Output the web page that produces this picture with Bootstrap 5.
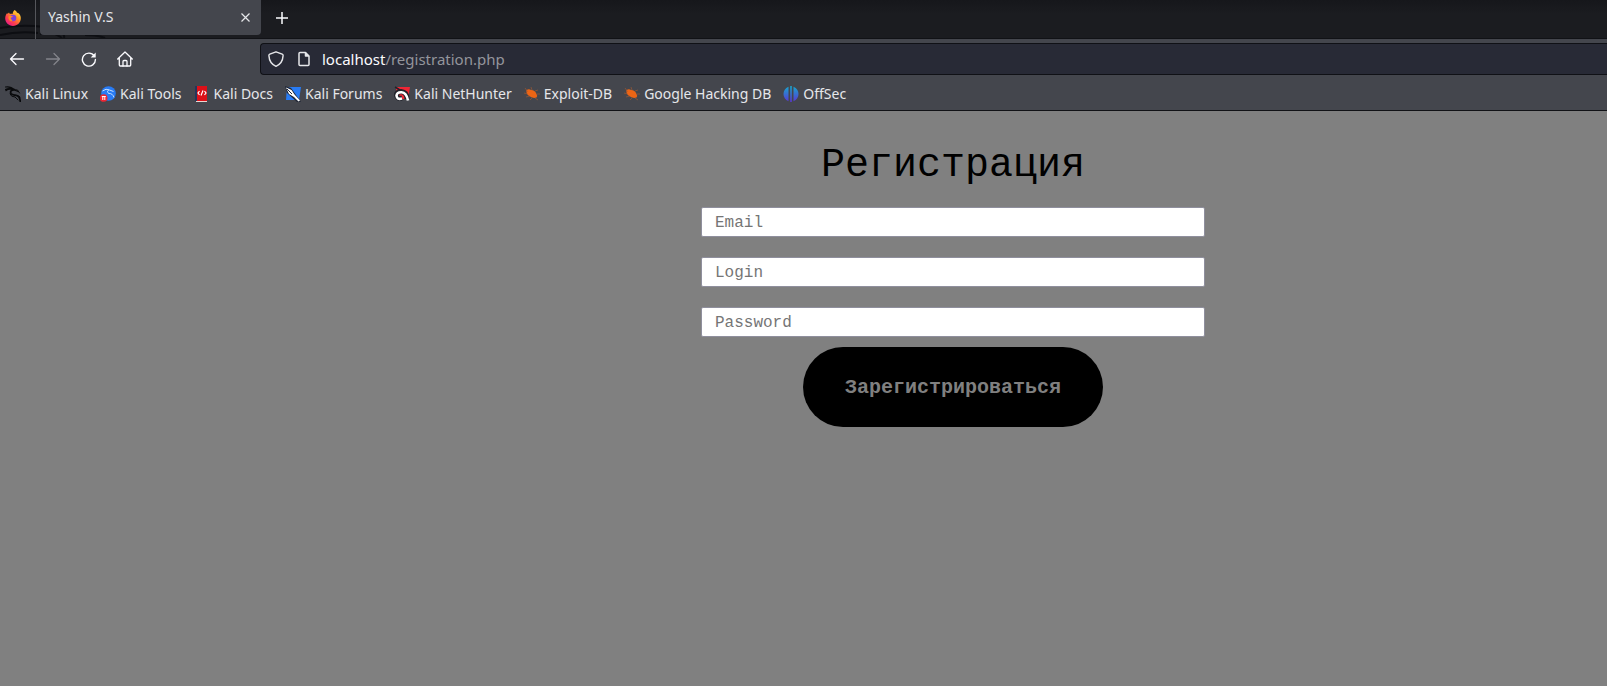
<!DOCTYPE html>
<html lang="ru">
<head>
<meta charset="utf-8">
<meta name="viewport" content="width=device-width, initial-scale=1">
<title>Yashin V.S</title>
<link href="https://cdn.jsdelivr.net/npm/bootstrap@5.3.0/dist/css/bootstrap.min.css" rel="stylesheet">
<style>
body{background:#808080;font-family:"Noto Sans",sans-serif;font-size:14px;line-height:20px;color:#e6e7ea}
svg{display:block;flex:none}
button{color:inherit}
.tabstrip{height:39px;background:linear-gradient(#16171b,#1b1c20 14px);border-bottom:1px solid #111216;position:relative}
.strip-art{position:absolute;left:0;top:0}
.pinned{width:36px;height:39px;padding-left:5px;border-right:1px solid #55565b;position:relative}
.page-tab{width:221px;height:35px;margin-left:4px;padding:0 10px 1px 8px;background:#44464d;border-radius:0 0 4px 4px;position:relative}
.plain{background:none;border:0;padding:0}
.new-tab{margin-left:8px;height:35px;position:relative}
.toolbar{background:#44464d;height:40px;padding:4px 0 4px 8px}
.nav-buttons{width:252px;gap:18px;height:32px}
.urlbar{height:32px;background:#282a36;border:1px solid #101116;border-right:0;border-radius:4px 0 0 4px;padding-left:7px;color:#fbfbfe;font-size:15px}
.urlbar div{margin-left:12px}
.urlbar span{color:#94959c}
.page-icon{margin-left:14px}
.bookmarks{background:#44464d;height:32px;padding:0 5px 2px;border-bottom:1px solid #111216;gap:12px}
.bookmarks a{color:#e6e7ea;gap:4px}
.page{padding:33px 0 0 299px;font-family:"Liberation Mono",monospace;color:#000}
.reg-form{width:100%;max-width:504px}
.reg-form h1{font-size:40px;line-height:44px;margin:0 0 19px;font-weight:400}
.field{height:30px;font-size:16px;line-height:20px;padding:6px 13px 4px;border:1px solid #8f8f9d;border-radius:2px;margin-bottom:20px}
.field::placeholder{color:#757575;opacity:1}
.field:last-of-type{margin-bottom:10px}
.submit{width:300px;max-width:100%;height:80px;padding:2px 0 0;background:#000;color:#808080;border:0;border-radius:40px;font-size:20px;font-weight:700}
</style>
</head>
<body class="overflow-hidden">
<header>
  <div class="tabstrip d-flex">
    <svg class="strip-art" width="110" height="38" fill="none" stroke="#0d0e12"><path d="M0 28q22-4 44-1t20 11M0 35q18-4 38-2M40 34q12-4 22 4M85 35q13 0 20 3" stroke-width="2"/></svg>
    <a href="#" class="pinned d-flex align-items-center pb-1" aria-label="Firefox">
      <svg width="16" height="16" viewBox="0 0 16 16"><defs><linearGradient id="fx" x1="1" y1="0" x2=".2" y2="1"><stop offset="0" stop-color="#fff44f"/><stop offset=".4" stop-color="#ff9a23"/><stop offset=".7" stop-color="#ff3f4b"/><stop offset="1" stop-color="#e5168c"/></linearGradient></defs><path fill="url(#fx)" d="M9.700 0c1.300.8 2 1.800 2.300 2.800.7-.1 1.300.2 1.800.7C15.200 4.700 15.900 6.400 15.800 8.300 15.800 12.500 12.400 16 8 16S.2 12.500.2 8.300c0-2.300.9-4.300 2-5.400l.3 1.100L4 2.600l.9 1.400c1-.4 2-.3 2.800 0C7.600 2.400 8.500.800 9.700 0z"/><circle cx="8" cy="8" r="3.300" fill="#7942d8"/><path fill="#ff8b24" d="M3.500 6.600C4.700 5.300 6.500 5.700 8 6.400c-.5.9-1.500 1-2.200 1.300-.2 1.300.6 2 1.800 2.300l-1.300 1.500C4.300 11 3 9 3.500 6.600z"/></svg>
    </a>
    <div class="page-tab d-flex align-items-center justify-content-between">
      <span>Yashin V.S</span>
      <button class="plain" aria-label="Close tab"><svg width="11" height="11" viewBox="0 0 11 11" stroke="#e6e7ea" stroke-width="1.200"><path d="M1.500 1.500l8 8m0-8l-8 8"/></svg></button>
    </div>
    <button class="plain new-tab" aria-label="New tab"><svg width="26" height="14" viewBox="-7 0 26 14" stroke="#fbfbfe" stroke-width="1.500"><path d="M0 7h12M6 1v12"/></svg></button>
  </div>
  <div class="toolbar d-flex">
    <div class="nav-buttons d-flex align-items-center flex-shrink-0">
      <button class="plain" aria-label="Back"><svg width="18" height="16" viewBox="0 0 18 16" fill="none" stroke="#fbfbfe" stroke-width="1.300" stroke-linecap="round" stroke-linejoin="round"><path d="M15.500 8h-13M8 2.500L2.500 8 8 13.500"/></svg></button>
      <button class="plain" aria-label="Forward"><svg width="18" height="16" viewBox="0 0 18 16" fill="none" stroke="#83848a" stroke-width="1.300" stroke-linecap="round" stroke-linejoin="round"><path d="M2.500 8h13M10 2.500L15.500 8 10 13.500"/></svg></button>
      <button class="plain" aria-label="Reload"><svg width="18" height="16" viewBox="0 0 18 16" fill="none" stroke="#fbfbfe" stroke-width="1.400" stroke-linecap="round"><path d="M14.300 5A6.500 6.500 0 1 0 15.400 8.500"/><path d="M15.700 1.500v5h-5z" fill="#fbfbfe" stroke="none"/></svg></button>
      <button class="plain" aria-label="Home"><svg width="18" height="16" viewBox="0 0 18 16" fill="none" stroke="#fbfbfe" stroke-width="1.300" stroke-linecap="round" stroke-linejoin="round"><path d="M1.700 8L9 1l7.300 7M3.300 7v7q0 1 1 1h9.400q1 0 1-1V7"/><path d="M7 15v-4.500q0-1 1-1h2q1 0 1 1V15"/></svg></button>
    </div>
    <div class="urlbar d-flex align-items-center flex-grow-1">
      <svg width="16" height="16" viewBox="0 0 16 16" fill="none" stroke="#e6e7ea" stroke-width="1.400" stroke-linejoin="round"><path d="M8 .8l6.200 2.400q1 .4.900 1.400C14.800 10 12.500 13.300 8 15.300 3.500 13.300 1.200 10 .9 4.600q-.1-1 .9-1.400z"/></svg>
      <svg class="page-icon" width="12" height="16" viewBox="0 0 12 16" fill="none" stroke="#e6e7ea" stroke-width="1.500" stroke-linejoin="round"><path d="M7.500 1.500H2q-1 0-1 1v11q0 1 1 1h8q1 0 1-1V5z"/><path d="M7.500 1.500V5H11" fill="#e6e7ea"/></svg>
      <div>localhost<span>/registration.php</span></div>
    </div>
  </div>
  <nav class="bookmarks d-flex align-items-center text-nowrap" aria-label="Bookmarks">
    <a href="#" class="d-flex align-items-center text-decoration-none"><svg width="16" height="16" viewBox="0 0 16 16" fill="none" stroke="#090a0c" stroke-linecap="round" stroke-linejoin="round"><path d="M.5 1Q6 .2 9 3.700M1 4.500Q4 2 9.500 4L13 5.500M.5 3.500Q4 1.500 8 3.500" stroke-width="1.200"/><path d="M9 3.500Q4.500 4.500 6 7.500C7.500 10 12 8 14 11q1 2 1.300 4.500" stroke-width="1.800"/><path d="M9 3.700l3.500.3 2 3M10 9q3 0 5 2M5 8q1 3 5 3l3 3" stroke-width="1"/></svg>Kali Linux</a>
    <a href="#" class="d-flex align-items-center text-decoration-none"><svg width="16" height="16" viewBox="0 0 16 16" fill="none"><circle cx="8.500" cy="7.500" r="7.300" fill="#287bf4"/><path d="M2.500 5q3.500-3 7-1l4 1.500M9 3.700Q6 5 8.500 7.500q4-.5 5.500 4" stroke="#c5dfff"/><circle cx="3.700" cy="12" r="3.800" fill="#ed2633"/><path d="M1.800 10.500h4M2.800 11v3M4.800 11v3" stroke="#fff"/></svg>Kali Tools</a>
    <a href="#" class="d-flex align-items-center text-decoration-none"><svg width="16" height="16" viewBox="0 0 16 16"><path fill="#24365c" d="M1 0h2v15H1z"/><path fill="#dc1018" d="M3 0h10v15H3z"/><path fill="#e8d6d2" d="M2 15h11v1H2z"/><path fill="none" stroke="#fff" stroke-width="1.200" d="M5.500 5L4 7l1.500 2M10.500 5L12 7l-1.500 2M9 4.500l-2 5"/></svg>Kali Docs</a>
    <a href="#" class="d-flex align-items-center text-decoration-none"><svg width="16" height="16" viewBox="0 0 16 16"><path fill="#287bf4" d="M2 1h14l-2 13H1z"/><path fill="#202737" d="M0 0l6 2 10 14h-4L2 7z"/><path fill="#fff" d="M1 1.500L6.500 4l3 4.500 5.500 6-1.500 1L9 11 4 8z"/><path stroke="#202737" d="M2 3l5 5"/></svg>Kali Forums</a>
    <a href="#" class="d-flex align-items-center text-decoration-none"><svg width="16" height="16" viewBox="0 0 16 16" fill="none"><path fill="#ee2635" d="M2 1h14l-2 12H2z"/><path stroke="#20222a" stroke-width="5" d="M13 13Q13 6 7 5.500q-4.500 0-4.500 4Q3 13 8 12"/><path stroke="#fff" stroke-width="2.600" d="M14 14.500Q12.500 6.500 7.500 6.200q-4.700-.2-5 3.500Q3 14 8 12.500"/><path stroke="#20222a" stroke-width="1.500" d="M1 1l5 3"/></svg>Kali NetHunter</a>
    <a href="#" class="d-flex align-items-center text-decoration-none"><svg width="16" height="16" viewBox="0 0 16 16"><path fill="#ee6514" d="M2.500 4Q5 2.500 7 4q4 0 5.500 4 1.500 2 0 3.500-4 1.500-8-2Q2 7.500 2.500 4z"/><path fill="none" stroke="#a95a31" stroke-width=".6" d="M1 2l3 4M7 1l1 3M0 7l4 1M2 11l4-1M6 14l2-2M11 5l3-1M13 8h3M11 12l3 2"/></svg>Exploit-DB</a>
    <a href="#" class="d-flex align-items-center text-decoration-none"><svg width="16" height="16" viewBox="0 0 16 16"><path fill="#ee6514" d="M2.500 4Q5 2.500 7 4q4 0 5.500 4 1.500 2 0 3.500-4 1.500-8-2Q2 7.500 2.500 4z"/><path fill="none" stroke="#a95a31" stroke-width=".6" d="M1 2l3 4M7 1l1 3M0 7l4 1M2 11l4-1M6 14l2-2M11 5l3-1M13 8h3M11 12l3 2"/></svg>Google Hacking DB</a>
    <a href="#" class="d-flex align-items-center text-decoration-none"><svg width="16" height="16" viewBox="0 0 16 16"><defs><linearGradient id="os" x2="0" y2="1"><stop stop-color="#16a8ce"/><stop offset="1" stop-color="#5936d2"/></linearGradient></defs><path fill="url(#os)" d="M5.500.8v14.400Q.5 13 .5 8T5.500.8zM7.200 0h1.600v16H7.200zM10.500.8v14.400q5-2.200 5-7.200t-5-7.200z"/></svg>OffSec</a>
  </nav>
</header>
<main class="page d-flex justify-content-center">
  <form class="reg-form text-center">
    <h1>Регистрация</h1>
    <input class="field d-block w-100" type="email" placeholder="Email" aria-label="Email">
    <input class="field d-block w-100" type="text" placeholder="Login" aria-label="Login">
    <input class="field d-block w-100" type="password" placeholder="Password" aria-label="Password">
    <button class="submit" type="button">Зарегистрироваться</button>
  </form>
</main>
<script src="https://cdn.jsdelivr.net/npm/bootstrap@5.3.0/dist/js/bootstrap.bundle.min.js"></script>
</body>
</html>
